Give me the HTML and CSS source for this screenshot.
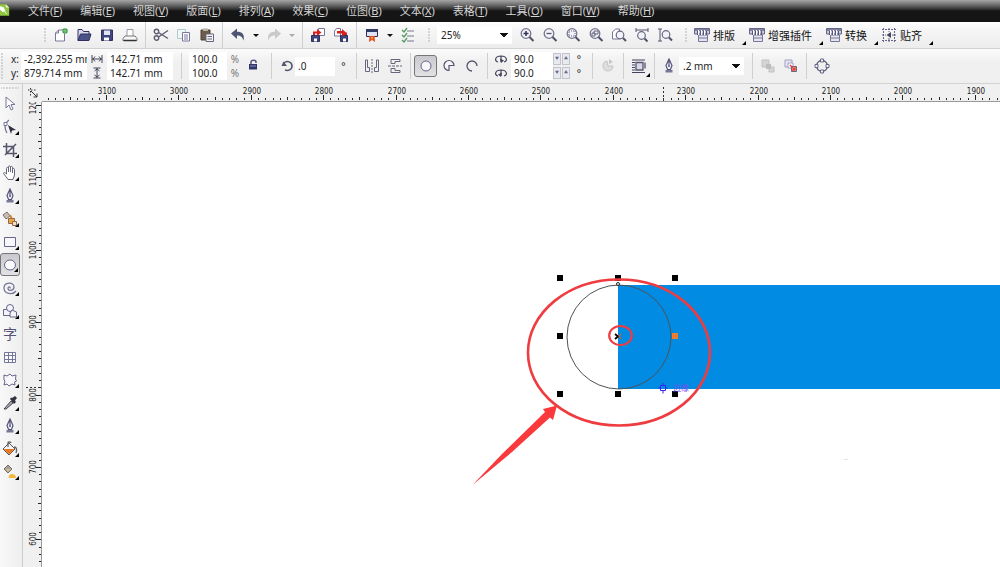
FILE: index.html
```html
<!DOCTYPE html>
<html lang="zh-CN">
<head>
<meta charset="utf-8">
<title>CorelDRAW</title>
<link rel="stylesheet" href="styles.css">
</head>
<body>
<svg class="defs" aria-hidden="true">
  <defs>
    <symbol id="pen" viewBox="0 0 16 16"><path d="M8 1L5 7.500 6.500 11.500h3L11 7.500zM8 2v5" fill="#eef" stroke="#555575" stroke-width="1.200"/><circle cx="8" cy="8" r="1" fill="#555575"/><path d="M4.500 12h7v2.500h-7z" fill="#777798"/></symbol>
    <symbol id="plugin" viewBox="0 0 16 16"><path d="M.5 1.500h15v5.500H.5z" fill="#c9c9da" stroke="#66668a"/><path d="M1 3h14" stroke="#66668a" stroke-width="1.500"/><path d="M4.500 14.500V8h9v6.500z" fill="#e4e4ee" stroke="#77779a"/><path d="M4.500 11h9" stroke="#77779a"/><path d="M4.500 3v5M7.500 3v5M10.500 3v5" stroke="#fff"/><path d="M3.500 4v4M6.500 4v4M9.500 4v4M12.500 4v4" stroke="#55557a"/></symbol>
    <symbol id="lens" viewBox="0 0 16 16"><circle cx="7" cy="6.500" r="4.800" fill="#f2f2fa" stroke="#77778f" stroke-width="1.300"/><path d="M10.500 10l4 4" stroke="#505068" stroke-width="2"/></symbol>
  </defs>
</svg>

<nav class="menubar">
  <svg class="app-logo" viewBox="0 0 12 16"><path d="M0 1h7l4 4v10H0z" fill="#8fc63d"/><path d="M7 1v4h4" fill="#e7f5ce"/><path d="M0 4l4 1 2 4-3 1-3-3zM5 9l3 4" fill="#fff" stroke="#fff"/></svg>
  <a href="#">文件(<u>F</u>)</a><a href="#">编辑(<u>E</u>)</a><a href="#">视图(<u>V</u>)</a><a href="#">版面(<u>L</u>)</a><a href="#">排列(<u>A</u>)</a><a href="#">效果(<u>C</u>)</a><a href="#">位图(<u>B</u>)</a><a href="#">文本(<u>X</u>)</a><a href="#">表格(<u>T</u>)</a><a href="#">工具(<u>O</u>)</a><a href="#">窗口(<u>W</u>)</a><a href="#">帮助(<u>H</u>)</a>
</nav>

<div class="bar standard">
  <span class="grip"></span>
  <button class="tool" aria-label="新建"><svg viewBox="0 0 16 16"><path d="M2.500 14V6l3-3h6v11z" fill="#fff" stroke="#77779a"/><path d="M2.500 6h3V3" fill="none" stroke="#77779a"/><circle cx="12" cy="4" r="2.800" fill="#3f9b45"/><path d="M12 1v6M9 4h6" stroke="#9fd39f" stroke-width=".7"/></svg></button>
  <button class="tool" aria-label="打开"><svg viewBox="0 0 16 16"><path d="M2 13.500v-11h4l1.500 2H13V7" fill="#d8d8ea" stroke="#303060"/><path d="M4.500 7H15l-2 6.500H2z" fill="#4a5288" stroke="#303060"/></svg></button>
  <button class="tool" aria-label="保存"><svg viewBox="0 0 16 16"><path d="M2.500 3h11v10.500h-11z" fill="#3e467d" stroke="#303060"/><path d="M5 3.500h6V8H5z" fill="#dfe3f4"/><path d="M5 10.500h5v3H5z" fill="#fff"/></svg></button>
  <button class="tool" aria-label="打印"><svg viewBox="0 0 16 16"><path d="M5 9V2.500h6V9" fill="#fff" stroke="#9999a8"/><path d="M3 9h10l2 2.500v2H1v-2z" fill="#f6f6f8" stroke="#777"/><path d="M1.500 13.500h13" stroke="#333" stroke-width="1.500"/></svg></button>
  <span class="sep"></span>
  <button class="tool" aria-label="剪切"><svg viewBox="0 0 16 16" fill="none" stroke="#5d5d70" stroke-width="1.400"><circle cx="3.500" cy="4.500" r="2.200"/><circle cx="3.500" cy="11" r="2.200"/><path d="M5.500 5.500L15 11.500M5.500 10L15 3.500"/></svg></button>
  <button class="tool" aria-label="复制"><svg viewBox="0 0 16 16"><path d="M1.500 2.500h8v9h-8z" fill="#eef7f4" stroke="#b0cbd0"/><path d="M6.500 5.500h7v8.500h-7z" fill="#fff" stroke="#77779a"/><path d="M8 8h4M8 10h4M8 12h4" stroke="#77779a"/></svg></button>
  <button class="tool" aria-label="粘贴"><svg viewBox="0 0 16 16"><path d="M2 3h9v10H2z" fill="#6d5c4c" stroke="#4c4038"/><path d="M4 1.500h5v2.500H4z" fill="#b9b0a6"/><path d="M7 7h7.500v7.500H7z" fill="#f4f4f8" stroke="#666680"/><path d="M8.500 9.500h4.500M8.500 12h4.500" stroke="#666680"/></svg></button>
  <span class="sep"></span>
  <button class="tool" aria-label="撤消"><svg viewBox="0 0 16 16"><path d="M1 6.500L7 1.500v3.200c5 0 8 2.300 6.500 9C12.500 10 11 8.500 7 8.500v3.500z" fill="#4d5570"/></svg></button>
  <button class="drop" aria-label="撤消列表"></button>
  <button class="tool" aria-label="重做"><svg viewBox="0 0 16 16"><path d="M15 6.500L9 1.500v3.200c-5 0-8 2.300-6.500 9C3.500 10 5 8.500 9 8.500v3.500z" fill="#c9c9cc"/></svg></button>
  <button class="drop off" aria-label="重做列表"></button>
  <span class="sep"></span>
  <button class="tool" aria-label="导入"><svg viewBox="0 0 16 16"><path d="M8.500 1.500h6v7h-6z" fill="#fff" stroke="#77779a"/><path d="M1.500 8.500h8v6h-8z" fill="#3e467d" stroke="#303060"/><path d="M4 11.500h3v3H4z" fill="#fff"/><path d="M3 8V4.500h4V2l4.500 3.500L7 9V6.500H5V8z" fill="#d6201f"/></svg></button>
  <button class="tool" aria-label="导出"><svg viewBox="0 0 16 16"><path d="M1.500 9V4l2-2.500h4V9z" fill="#fff" stroke="#77779a"/><path d="M7.500 8.500h7v6h-7z" fill="#3e467d" stroke="#303060"/><path d="M10 11.500h3v3h-3z" fill="#fff"/><path d="M4 4h5V2l4 3.500h1V8h-2L9 9V6.500H4z" fill="#d6201f"/></svg></button>
  <span class="sep"></span>
  <button class="tool" aria-label="应用程序启动器"><svg viewBox="0 0 16 16"><path d="M2.500 2.500h11v7h-11z" fill="#dfe3f4" stroke="#303050"/><path d="M2 2h12v3H2z" fill="#303a66"/><path d="M5.500 9h5l.5 6-3-2-3 2z" fill="#e3501d"/><path d="M7 10h2l-1 3z" fill="#ffb640"/></svg></button>
  <button class="drop" aria-label="启动器列表"></button>
  <button class="tool" aria-label="选项"><svg viewBox="0 0 16 16" fill="none"><path d="M2 3l2 2 3-4M2 8l2 2 3-4M2 13l2 2 3-4" stroke="#4f9a5d" stroke-width="1.300"/><path d="M7 4h7M7 9h7M7 14h7" stroke="#777790"/></svg></button>
  <span class="grip group"></span>
  <select class="zoom-level" aria-label="缩放级别"><option>25%</option></select>
  <button class="tool" aria-label="放大"><svg viewBox="0 0 16 16"><use href="#lens"/><path d="M4.500 6.500h5M7 4v5" stroke="#303050" stroke-width="1.500"/></svg></button>
  <button class="tool" aria-label="缩小"><svg viewBox="0 0 16 16"><use href="#lens"/><path d="M4.500 6.500h5" stroke="#55556c" stroke-width="1.300"/></svg></button>
  <button class="tool" aria-label="缩放选定范围"><svg viewBox="0 0 16 16"><use href="#lens"/><path d="M4 4h6v5H4z" fill="none" stroke="#66667c" stroke-dasharray="1 1"/></svg></button>
  <button class="tool" aria-label="缩放全部对象"><svg viewBox="0 0 16 16"><use href="#lens"/><path d="M6 4h4v3H6zM4 6h3v3H4z" fill="none" stroke="#66667c"/></svg></button>
  <button class="tool" aria-label="显示页面"><svg viewBox="0 0 16 16"><path d="M1.500 12V5l3-3h4v10z" fill="#fff" stroke="#77779a"/><circle cx="9" cy="8" r="3.800" fill="#f2f2fa" stroke="#66667e" stroke-width="1.200"/><path d="M12 11l3 3" stroke="#505068" stroke-width="2"/></svg></button>
  <button class="tool" aria-label="按页宽显示"><svg viewBox="0 0 16 16"><path d="M2 1v4M14 1v4M2 3h12" stroke="#55556c"/><circle cx="7.500" cy="8.500" r="3.800" fill="#f2f2fa" stroke="#66667e" stroke-width="1.200"/><path d="M10.500 11.500l3 3" stroke="#505068" stroke-width="2"/></svg></button>
  <button class="tool" aria-label="按页高显示"><svg viewBox="0 0 16 16"><path d="M1 2h4M1 14h4M3 2v12" stroke="#55556c"/><circle cx="9" cy="7.500" r="3.800" fill="#f2f2fa" stroke="#66667e" stroke-width="1.200"/><path d="M12 10.500l3 3" stroke="#505068" stroke-width="2"/></svg></button>
  <span class="grip group"></span>
  <button class="labelled"><svg viewBox="0 0 16 16"><use href="#plugin"/></svg>排版</button>
  <button class="labelled"><svg viewBox="0 0 16 16"><use href="#plugin"/></svg>增强插件</button>
  <button class="labelled"><svg viewBox="0 0 16 16"><use href="#plugin"/></svg>转换</button>
  <button class="labelled"><svg viewBox="0 0 16 16"><path d="M2.500 1v14M13.500 1v14M1 2.500h14M1 13.500h14M8 1v4M8 11v4M1 8h4M11 8h4" stroke="#66668a" stroke-dasharray="2 1"/><path d="M10 5v6L5.500 8z" fill="#44445e"/></svg>贴齐</button>
</div>

<div class="bar property">
  <span class="grip edge"></span>
  <div class="pair names"><label for="px">x:</label><label for="py">y:</label></div>
  <div class="pair field pos"><input id="px" value="-2,392.255 mm"><input id="py" value="879.714 mm"></div>
  <div class="pair marks">
    <svg viewBox="0 0 12 12"><path d="M1 2v8M11 2v8M1 6h10M4 3.500L2 6l2 2.500M8 3.500L10 6 8 8.500" fill="none" stroke="#44445c"/></svg>
    <svg viewBox="0 0 12 12"><path d="M2.500 1h7M2.500 11h7M6 1v10M3.500 4L6 2l2.500 2M3.500 8L6 10l2.500-2" fill="none" stroke="#44445c"/></svg>
  </div>
  <div class="pair field pos"><input aria-label="宽度" value="142.71 mm"><input aria-label="高度" value="142.71 mm"></div>
  <span class="sep wide"></span>
  <div class="pair field scale"><input aria-label="水平缩放" value="100.0"><input aria-label="垂直缩放" value="100.0"></div>
  <div class="pair percent"><span>%</span><span>%</span></div>
  <button class="tool lock" aria-label="锁定比率"><svg viewBox="0 0 16 16"><path d="M6 7V4c0-2.500 5-2.500 5 0v1" fill="none" stroke="#555580" stroke-width="1.500"/><path d="M4 6h8v5.500H4z" fill="#2f3566"/><path d="M5 8h6" stroke="#8c92bd"/></svg></button>
  <span class="sep wide"></span>
  <button class="tool turn" aria-label="旋转"><svg viewBox="0 0 16 16"><path d="M5 5C8 2 13 4 13 8s-4 5-7 4" fill="none" stroke="#55556c" stroke-width="1.500"/><path d="M2.500 8H8L4.500 3.500z" fill="#55556c"/></svg></button>
  <div class="field angle"><input aria-label="旋转角度" value=".0"></div>
  <span class="degree">°</span>
  <span class="sep"></span>
  <button class="tool" aria-label="水平镜像"><svg viewBox="0 0 16 16" fill="none" stroke="#66667c"><path d="M1.500 2v11.500h4V9.500h-2V2zM14.500 2v11.500h-4V9.500h2V2z"/><path d="M8 1v14" stroke-dasharray="2 1"/></svg></button>
  <button class="tool" aria-label="垂直镜像"><svg viewBox="0 0 16 16" fill="none" stroke="#66667c"><path d="M13 1.500H4v4h4v-2h5zM13 14.500H4v-4h4v2h5z"/><path d="M1 8h14" stroke-dasharray="3 1"/></svg></button>
  <span class="sep"></span>
  <button class="tool on" aria-label="椭圆形"><svg viewBox="0 0 16 16"><circle cx="8" cy="8" r="5" fill="#f6f6fa" stroke="#66668a"/></svg></button>
  <button class="tool" aria-label="饼形"><svg viewBox="0 0 16 16"><path d="M8 7.500h5a5 5 0 1 0-5 5z" fill="#f6f6fa" stroke="#55556c" stroke-width="1.200"/></svg></button>
  <button class="tool" aria-label="弧形"><svg viewBox="0 0 16 16"><path d="M13 8a5 5 0 1 0-5 5" fill="none" stroke="#55556c" stroke-width="1.300"/></svg></button>
  <span class="sep"></span>
  <div class="pair marks arcs">
    <svg viewBox="0 0 12 12"><path d="M3 9C-1 8 0 3 6 3s7 5 3 6M6 3v6" fill="none" stroke="#44445c" stroke-width="1.200"/><path d="M5 5.500l4 2-3 2.500z" fill="#44445c"/></svg>
    <svg viewBox="0 0 12 12"><path d="M3 9C-1 8 0 3 6 3s7 5 3 6M6 3v6" fill="none" stroke="#44445c" stroke-width="1.200"/><path d="M7 5.500l-4 2 3 2.500z" fill="#44445c"/></svg>
  </div>
  <div class="pair field arc"><input aria-label="起始角度" value="90.0"><input aria-label="结束角度" value="90.0"></div>
  <div class="spins"><button aria-label="减少起始角度">▼</button><button aria-label="增加起始角度">▲</button><button aria-label="减少结束角度">▼</button><button aria-label="增加结束角度">▲</button></div>
  <div class="pair degrees"><span>°</span><span>°</span></div>
  <span class="sep"></span>
  <button class="tool" aria-label="更改方向"><svg viewBox="0 0 16 16"><path d="M7 3a5 5 0 1 0 6 5H8z" fill="#ddd" stroke="#c6c6c8"/><path d="M9 1l4 3-4 2z" fill="#c6c6c8"/></svg></button>
  <span class="sep"></span>
  <button class="tool corner" aria-label="文本换行"><svg viewBox="0 0 16 16"><path d="M1 2h13M1 4.500h3M1 7h3M1 9.500h3M1 12h3M1 14.500h13M14 4.500v6" stroke="#44445c" stroke-width="1.200"/><path d="M5 4.500h7v7.500H5z" fill="#d8d8e6" stroke="#55556f" stroke-width="1.300"/></svg></button>
  <span class="sep"></span>
  <svg class="pen-mark" viewBox="0 0 16 16"><use href="#pen"/></svg>
  <select class="outline-width" aria-label="轮廓宽度"><option>.2 mm</option></select>
  <span class="sep group"></span>
  <button class="tool" aria-label="到图层前面"><svg viewBox="0 0 16 16"><path d="M2 2h7v7H2zM9 9h5v5H9z" fill="#d4d4d6" stroke="#c2c2c4"/><path d="M6 6h5v5H6z" fill="#bdbdc0"/></svg></button>
  <button class="tool" aria-label="到图层后面"><svg viewBox="0 0 16 16"><path d="M2 2h7v7H2z" fill="#e6e6f2" stroke="#a0a0c0"/><path d="M5 5h5v5H5z" fill="#fff" stroke="#a0a0c0"/><path d="M8.500 8.500h5v5h-5z" fill="#f3dada" stroke="#66667c"/><path d="M7 7l5 5M12 8.500V12H8.500" fill="none" stroke="#df3f3b" stroke-width="1.400"/></svg></button>
  <span class="sep"></span>
  <button class="tool" aria-label="转换为曲线"><svg viewBox="0 0 16 16"><circle cx="8" cy="8" r="5.500" fill="none" stroke="#55556c" stroke-width="1.300"/><path d="M6.500 1h3v3h-3zM6.500 12h3v3h-3zM1 6.500h3v3H1zM12 6.500h3v3h-3z" fill="#f4f4fa" stroke="#66668a"/></svg></button>
</div>

<main class="workspace">
  <aside class="toolbox">
    <span class="grip flat"></span>
    <button aria-label="挑选"><svg viewBox="0 0 16 16"><path d="M4 1v11l3-3 2 5 2-1-2-4.500h4z" fill="#fff" stroke="#77779a"/></svg></button>
    <button class="corner" aria-label="形状"><svg viewBox="0 0 16 16"><path d="M7 1C2 5 2 9 5 14" fill="none" stroke="#77779a" stroke-width="1.300"/><path d="M2 3.500h3v3H2z" fill="#fff" stroke="#77779a"/><path d="M6 6l8 5-4 .5-1 3.500z" fill="#303044"/></svg></button>
    <button class="corner" aria-label="裁剪"><svg viewBox="0 0 16 16"><path d="M4.500 1v10.500H15M1 4.500h10.500V15M3 13L14 2" fill="none" stroke="#55556c" stroke-width="1.500"/></svg></button>
    <button class="corner" aria-label="平移"><svg viewBox="0 0 16 16"><path d="M5 13L1.500 8.500c0-1.500 1.500-1 3 .5V3.500c0-1.500 2-1.500 2 0V7 2c0-1.500 2-1.500 2 0v5-4.500c0-1.500 2-1.500 2 0V8 4.500c0-1.500 2-1.500 2 0V10l-1.500 4.500H6z" fill="#fff" stroke="#66667e"/></svg></button>
    <button class="corner" aria-label="钢笔"><svg viewBox="0 0 16 16"><use href="#pen"/></svg></button>
    <button class="corner" aria-label="智能填充"><svg viewBox="0 0 16 16"><path d="M1 4l4-3 3 4-4 3z" fill="#c4bfba" stroke="#77706a"/><path d="M8 4l2 4" stroke="#d98a2b" stroke-width="2"/><path d="M6.500 7.500h6v5h-6z" fill="#f0a53c" stroke="#8d6a50"/><path d="M10.500 10.500h4v4h-4z" fill="#f7dfb8" stroke="#8d6a50"/></svg></button>
    <button class="corner" aria-label="矩形"><svg viewBox="0 0 16 16"><path d="M2.500 3.500h11v9h-11z" fill="#f8f8fc" stroke="#66668a"/></svg></button>
    <button class="corner on" aria-label="椭圆形工具"><svg viewBox="0 0 16 16"><ellipse cx="8" cy="8" rx="5.500" ry="5" fill="#fafaff" stroke="#66668a"/></svg></button>
    <button class="corner" aria-label="螺纹"><svg viewBox="0 0 16 16"><path d="M8 8.500C9 7 6 6 6 8.500c0 3 6 2.500 6-1.500C12 1.500 2 2 2 8c0 6.500 9 7 12 3" fill="none" stroke="#77779a" stroke-width="1.300"/></svg></button>
    <button class="corner" aria-label="基本形状"><svg viewBox="0 0 16 16" fill="#f4f4fa" stroke="#66668a"><path d="M1.500 6.500h7v6h-7z"/><circle cx="8" cy="5" r="3.500"/><path d="M10 7l4.500 2v5H8V10z"/></svg></button>
    <button class="letter" aria-label="文本工具">字</button>
    <button aria-label="表格工具"><svg viewBox="0 0 16 16"><path d="M2.500 3.500h11v10h-11zM2 6.500h12M2 10.500h12M6.500 3v10M10.500 3v10" fill="#fafaff" stroke="#77779a"/></svg></button>
    <button class="corner" aria-label="变形"><svg viewBox="0 0 16 16"><path d="M2 3l3 1 3-2 2 2 4-1-.5 4 1 2-2 1 .5 3-3-1-3 2-2-2-3 1 1-4-1-1z" fill="#f8f8fc" stroke="#66668a"/></svg></button>
    <button class="corner" aria-label="滴管"><svg viewBox="0 0 16 16"><path d="M2 14l7-8 2 2-7 6z" fill="#a9a9b6" stroke="#44444e"/><path d="M8 4l4 5 2-2-1-1.500L15 3l-2-2-3 2-1-.5z" fill="#33333f"/></svg></button>
    <button class="corner" aria-label="轮廓笔"><svg viewBox="0 0 16 16"><use href="#pen"/></svg></button>
    <button class="corner" aria-label="填充"><svg viewBox="0 0 16 16"><path d="M1 8l6-6 6 6-6 6z" fill="#f2f2f6" stroke="#55555f"/><path d="M1.500 8h11L7 13.500z" fill="#e8791e"/><path d="M6 6V2c0-1.500 3-1.500 3 0M12 6c3 0 3 3 2 6" fill="none" stroke="#66605a" stroke-width="1.300"/></svg></button>
    <button class="corner" aria-label="交互式填充"><svg viewBox="0 0 16 16"><path d="M2 5l4-4 4 4-4 4z" fill="#a7a199" stroke="#77706a"/><path d="M4 5h5L6 8z" fill="#d4c38b"/><path d="M7 14c-1-2 1-4 3-4s4 1 4 4z" fill="#f3b73e"/></svg></button>
  </aside>
  <div class="origin"><svg viewBox="0 0 12 12"><path d="M1 3h8M3.500 1v9" stroke="#333" stroke-dasharray="1.500 1.500"/><path d="M4 4l6 6M10 6.500V10H6.500" fill="none" stroke="#333"/></svg></div>
  <svg class="ruler-h" id="ruler-h"></svg>
  <svg class="ruler-v" id="ruler-v"></svg>
  <svg class="canvas" role="img" aria-label="绘图页面">
    <svg x="576" y="183" width="100%" height="104"><rect width="100%" height="104" fill="#028be2"/></svg>
    <circle cx="577" cy="235" r="52" fill="none" stroke="#4c5358"/>
    <circle cx="576" cy="182" r="1.500" fill="#fff" stroke="#222"/>
    <g fill="#000">
      <rect x="515" y="173" width="6" height="6"/><rect x="573" y="173" width="6" height="6"/><rect x="630" y="173" width="6" height="6"/>
      <rect x="515" y="231" width="6" height="6"/><rect x="630" y="231" width="6" height="6" fill="#f07d2b"/>
      <rect x="515" y="289" width="6" height="6"/><rect x="573" y="289" width="6" height="6"/><rect x="630" y="289" width="6" height="6"/>
    </g>
    <path d="M573 232l3 2.500-3 2.500" fill="none" stroke="#000" stroke-width="1.800"/>
    <path d="M579 232l-2 2 2 3" fill="none" stroke="#d4572e" stroke-width="1.300"/>
    <g fill="none" stroke="#ee3c40" stroke-width="2.600">
      <ellipse cx="577" cy="250.500" rx="91" ry="73"/>
      <ellipse cx="578.500" cy="233.500" rx="11.300" ry="9.500" stroke-width="2.200"/>
    </g>
    <path d="M430.500 383L460 352 503 310 501 307 515 303.500 511 318 508 315.500 470 350z" fill="#f9393b"/>
    <path d="M618.500 283.500h5v5h-5zM621 281v2.500M621 288.500v3M616.500 286h2M623.500 286h2" fill="none" stroke="#3b20f5"/>
    <text class="snap" x="631" y="289">边缘</text>
    <path d="M802 357.500h4" stroke="#e3e3e3"/>
  </svg>
</main>
<script src="rulers.js"></script>
</body>
</html>
```
FILE: styles.css
```css
* { box-sizing: border-box; }
html, body { height: 100%; margin: 0; }
body {
  display: flex;
  flex-direction: column;
  overflow: hidden;
  background: #f0f0f0;
  color: #222;
  font-family: "Noto Sans", "Noto Sans CJK SC", sans-serif;
  font-size: 10px;
}
button, input, select { font: inherit; color: inherit; margin: 0; padding: 0; border: 0; background: none; border-radius: 0; }
svg { display: block; }
.defs { position: absolute; width: 0; height: 0; }

.menubar {
  display: flex;
  flex: none;
  gap: 18px;
  height: 22px;
  background: linear-gradient(#a5a5a5 0, #777 4px, #353535 9px, #151515 11px, #151515);
  font-size: 11px;
  line-height: 21px;
}
.app-logo { width: 10px; height: 16px; margin-top: 2px; }
.menubar a { color: #d6d6d6; text-decoration: none; white-space: nowrap; }

.bar { display: flex; flex: none; align-items: center; border-bottom: 1px solid #d2d2d2; }
.standard { height: 27px; padding-left: 41px; background: linear-gradient(#fff, #f6f6f6 30%, #ececec); }
.property { height: 35px; background: linear-gradient(#fbfbfb, #f0f0f0 40%, #efefef); }

.grip { flex: none; width: 8px; height: 16px; background: radial-gradient(circle, #b4b4b8 1px, transparent 1px) center / 8px 3px repeat-y; }
.grip.edge { width: 4px; height: 26px; background-size: 4px 3px; }
.grip.flat { width: 18px; height: 8px; background: radial-gradient(circle, #b4b4b8 1px, transparent 1px) center / 3px 8px repeat-x; }
.grip.group { margin: 0 4px 0 6px; }
.sep { flex: none; width: 8px; height: 26px; background: linear-gradient(#cfcfcf, #cfcfcf) center / 1px 100% no-repeat; }
.sep.wide { width: 16px; }
.sep.group { margin-left: 4px; }

.tool { position: relative; flex: none; display: grid; place-items: center; width: 23px; height: 22px; }
.tool svg { width: 16px; height: 16px; }
.on { border: 1px solid #77777b; border-radius: 3px; background: linear-gradient(#c9c9cd, #e2e2e5); }
.drop { flex: none; width: 13px; height: 22px; display: grid; place-items: center; }
.drop::before { content: ""; border: 3px solid transparent; border-top-color: #111; border-bottom: 0; }
.drop.off::before { border-top-color: #aaa; }

select {
  appearance: none;
  height: 18px;
  padding-left: 4px;
  background: linear-gradient(45deg, transparent 50%, #111 50%) right 8px center / 4px 4px no-repeat, linear-gradient(-45deg, transparent 50%, #111 50%) right 4px center / 4px 4px no-repeat, #fff;
}
.zoom-level { flex: none; width: 75px; margin-right: 3px; font-size: 10px; }

.labelled { position: relative; flex: none; display: flex; align-items: center; gap: 3px; height: 20px; padding-right: 11px; margin-right: 3px; font-size: 11px; color: #111; }
.labelled svg { width: 16px; height: 16px; }
.labelled::after, .corner::after {
  content: "";
  position: absolute;
  right: 0;
  bottom: 0;
  border: 2px solid #000;
  border-top-color: transparent;
  border-left-color: transparent;
}

.pair { flex: none; display: grid; grid-template-rows: 14px 14px; align-items: center; line-height: 14px; }
.names { width: 17px; padding-left: 7px; }
.field input { width: 100%; height: 14px; background: #fff; padding-left: 3px; }
.pos { width: 66px; }
.marks { width: 20px; justify-items: center; }
.marks svg { width: 12px; height: 12px; }
.scale { width: 38px; }
.percent { width: 16px; justify-items: center; color: #777; }
.lock { width: 20px; }
.turn { width: 16px; }
.angle { flex: none; width: 40px; }
.angle input { height: 19px; }
.degree { width: 17px; text-align: center; }
.arcs { width: 20px; }
.arc { width: 42px; }
.spins { flex: none; display: grid; grid-template: 14px 14px / 8px 8px; gap: 0 1px; }
.spins button { align-self: center; height: 12px; border: 1px solid #c3c3cd; background: #e9e9f0; color: #66668a; font-size: 4px; line-height: 10px; }
.degrees { width: 18px; justify-items: center; }
.pen-mark { flex: none; width: 16px; height: 16px; margin: 0 2px 0 3px; }
.outline-width { flex: none; width: 65px; }

.workspace { flex: 1; min-height: 0; display: grid; grid-template: 18px minmax(0, 1fr) / 23px 19px minmax(0, 1fr); }
.toolbox { grid-row: 1 / 3; display: flex; flex-direction: column; align-items: center; padding-right: 2px; border-right: 1px solid #cdcdcd; background: linear-gradient(90deg, #f8f8f8, #eee); }
.toolbox button { position: relative; flex: none; display: grid; place-items: center; width: 20px; height: 23px; }
.toolbox button svg { width: 16px; height: 16px; }
.toolbox .corner::after { right: 1px; bottom: 3px; }
.toolbox .letter { color: #55557a; font-size: 14px; line-height: 20px; }
.origin { display: grid; place-items: center; }
.origin svg { width: 12px; height: 12px; }
.ruler-h, .ruler-v { width: 100%; height: 100%; overflow: hidden; font-family: "DejaVu Sans Condensed", "DejaVu Sans", sans-serif; font-size: 8px; fill: #222; }
.ruler-h { border-bottom: 1px solid #999; }
.ruler-v { border-right: 1px solid #999; }
.canvas { width: 100%; height: 100%; background: #fff; }
.snap { fill: #7350ef; font-size: 8px; }
```
FILE: rulers.js
```js
const NS = 'http://www.w3.org/2000/svg';
const STEP = 72.4;

function add(parent, name, attrs, text) {
  const el = document.createElementNS(NS, name);
  for (const key in attrs) el.setAttribute(key, attrs[key]);
  if (text) el.textContent = text;
  parent.append(el);
}

function drawRuler(id, start, firstValue, mark, vertical) {
  const svg = document.getElementById(id);
  svg.replaceChildren();
  const box = svg.getBoundingClientRect();
  const length = vertical ? box.height : box.width;
  for (let i = -10; start + i * STEP / 10 < length; i++) {
    const pos = Math.round(start + i * STEP / 10);
    const size = i % 10 === 0 ? 5 : i % 5 === 0 ? 3 : 2;
    add(svg, 'rect', vertical
      ? { x: 18 - size, y: pos, width: size, height: 1 }
      : { x: pos, y: 16 - size, width: 1, height: size });
  }
  for (let i = 0; start + i * STEP < length; i++) {
    const pos = Math.round(start + i * STEP);
    add(svg, 'text', vertical
      ? { transform: `translate(13 ${pos}) rotate(-90)`, 'text-anchor': 'middle' }
      : { x: pos + 1, y: 10, 'text-anchor': 'middle' }, String(firstValue - i * 100));
  }
  add(svg, 'path', { d: mark, stroke: '#333', 'stroke-dasharray': '2 2' });
}

function drawRulers() {
  drawRuler('ruler-h', 64, 3100, 'M621.5 3V17', false);
  drawRuler('ruler-v', 3, 1200, 'M3 285.5H18', true);
}

drawRulers();
addEventListener('resize', drawRulers);
```
